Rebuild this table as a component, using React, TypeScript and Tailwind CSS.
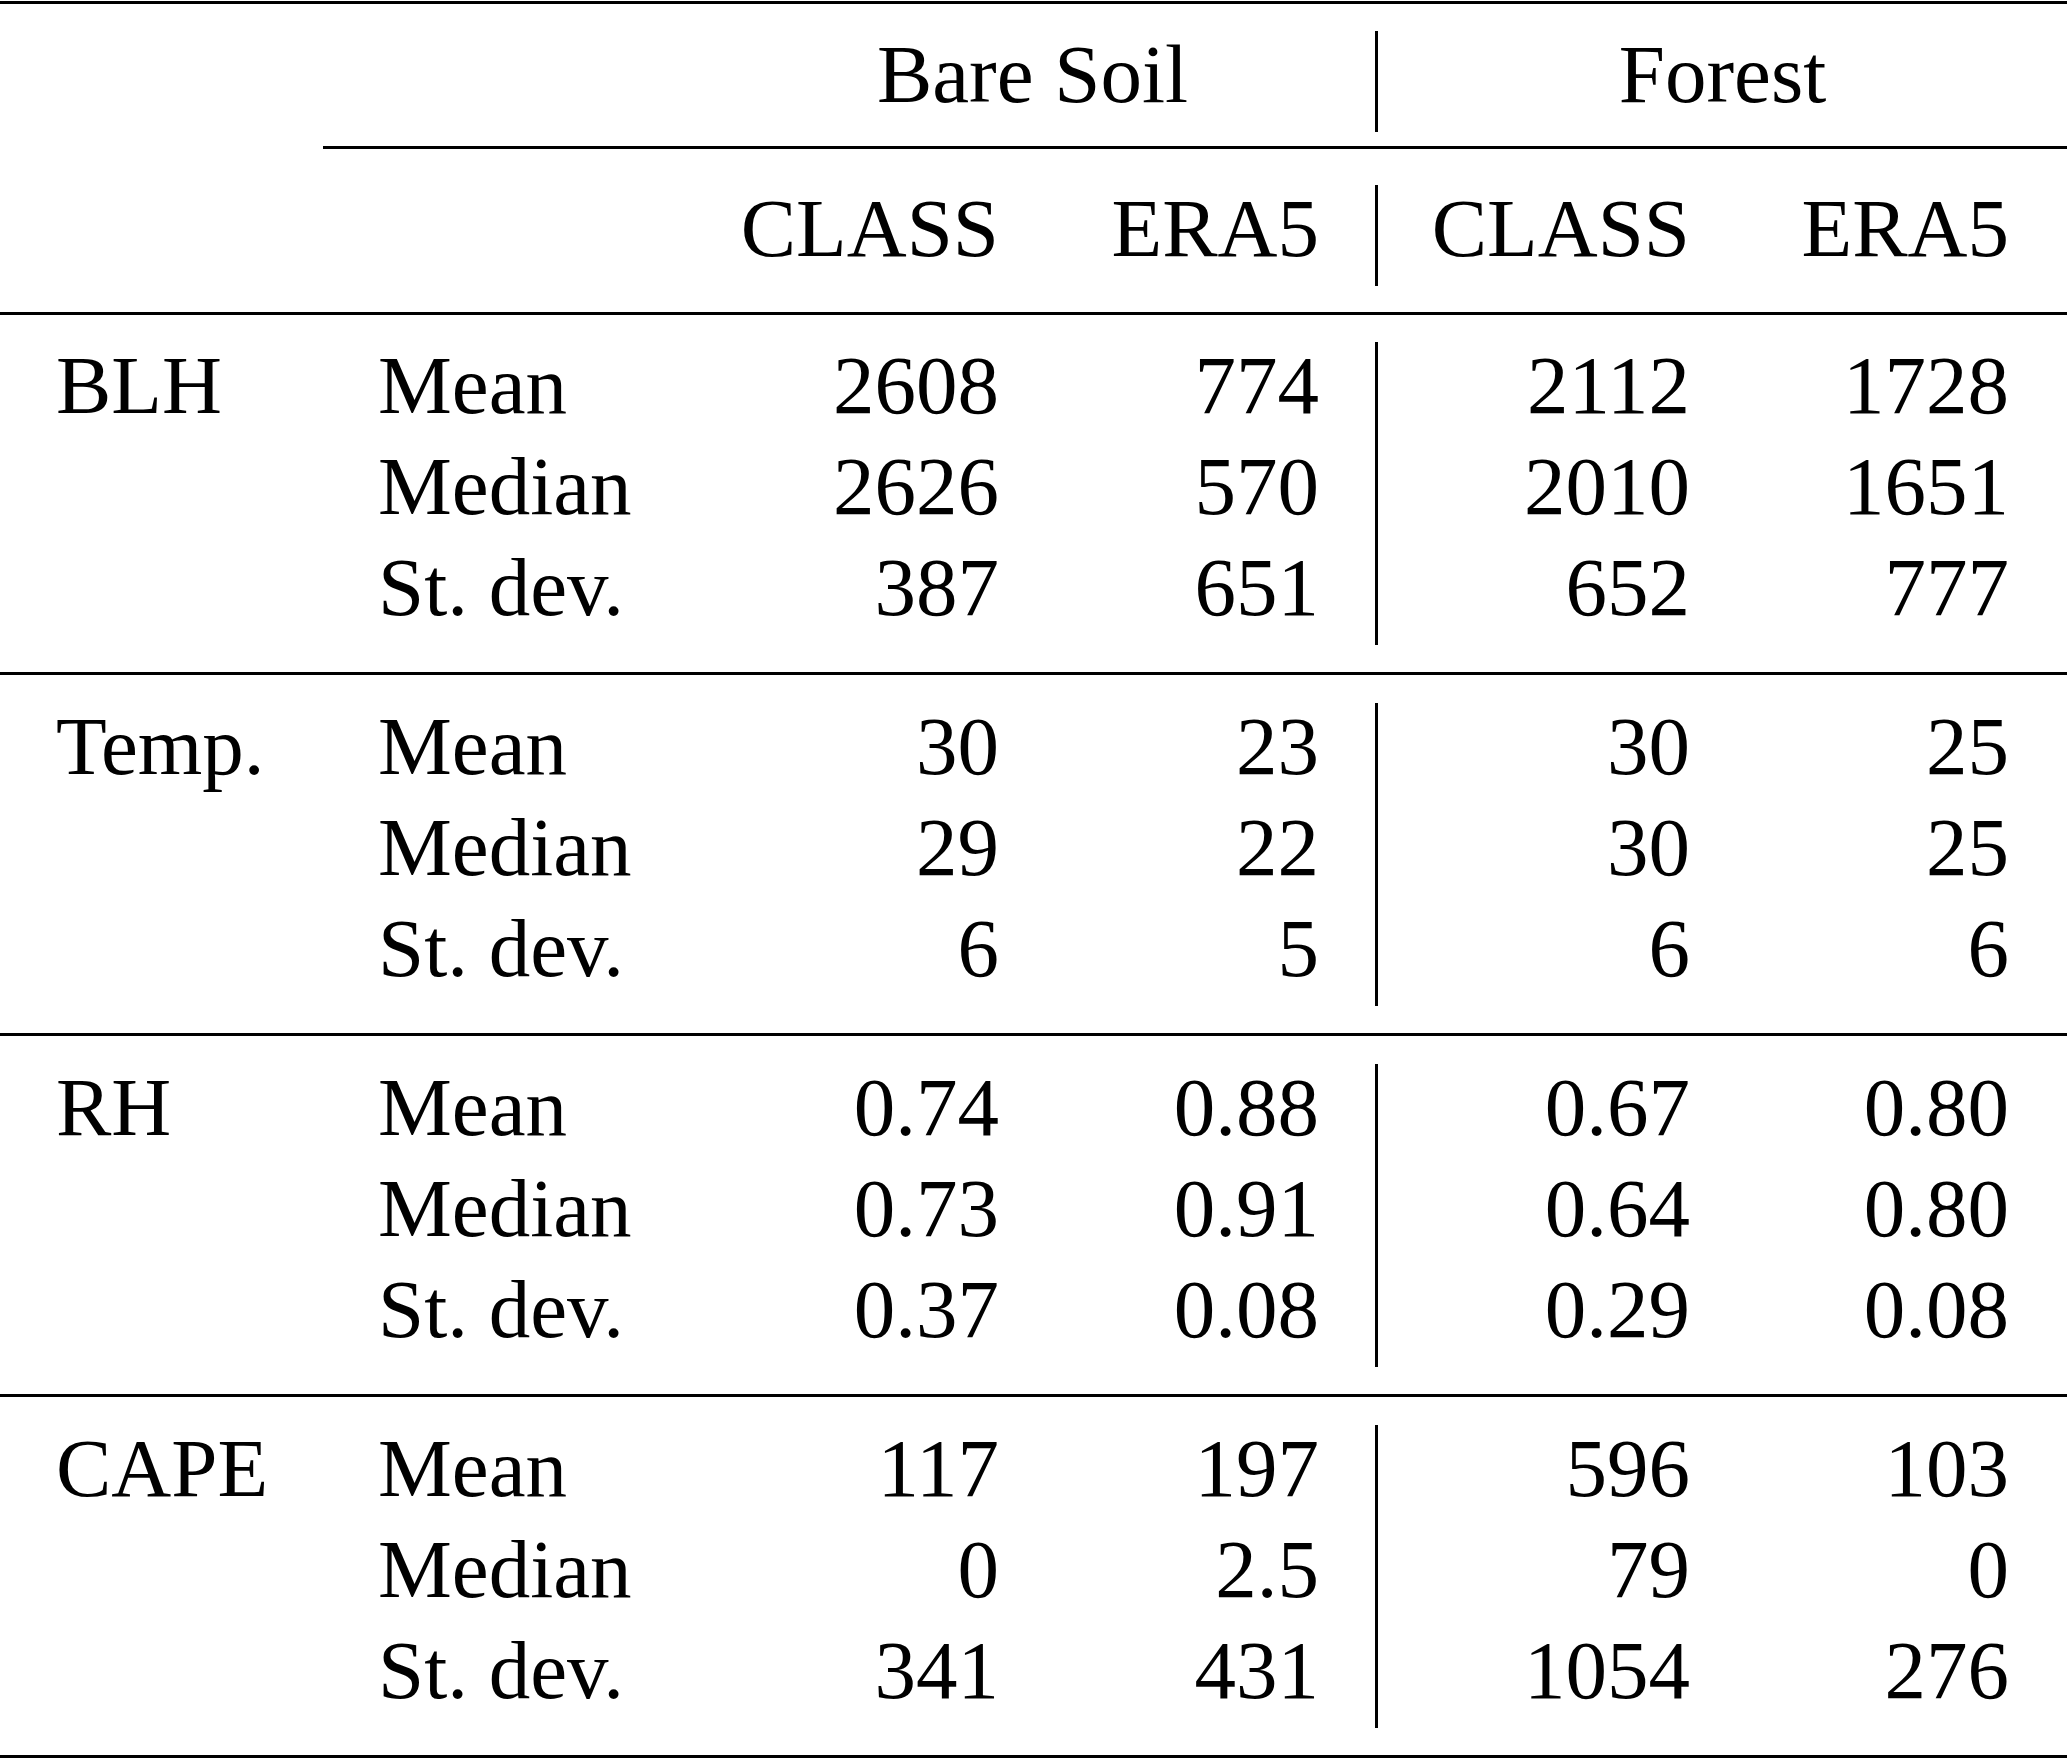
const groups = [
  {
    name: 'BLH',
    rows: [
      ['Mean', '2608', '774', '2112', '1728'],
      ['Median', '2626', '570', '2010', '1651'],
      ['St. dev.', '387', '651', '652', '777'],
    ],
  },
  {
    name: 'Temp.',
    rows: [
      ['Mean', '30', '23', '30', '25'],
      ['Median', '29', '22', '30', '25'],
      ['St. dev.', '6', '5', '6', '6'],
    ],
  },
  {
    name: 'RH',
    rows: [
      ['Mean', '0.74', '0.88', '0.67', '0.80'],
      ['Median', '0.73', '0.91', '0.64', '0.80'],
      ['St. dev.', '0.37', '0.08', '0.29', '0.08'],
    ],
  },
  {
    name: 'CAPE',
    rows: [
      ['Mean', '117', '197', '596', '103'],
      ['Median', '0', '2.5', '79', '0'],
      ['St. dev.', '341', '431', '1054', '276'],
    ],
  },
];

const grid = 'grid grid-cols-[323px_367px_368px_317px_372px_320px] h-[101px]';

function Rule({ className = '' }: { className?: string }) {
  return <div className={`h-[3px] bg-black ${className}`} />;
}

function DataRow({ label, cells }: { label: string; cells: string[] }) {
  return (
    <div className={grid}>
      <div className="pl-[56px]">{label}</div>
      <div className="pl-[55px]">{cells[0]}</div>
      <div className="pr-[59px] text-right">{cells[1]}</div>
      <div className="pr-[56px] text-right">{cells[2]}</div>
      <div className="border-l-[3px] border-black pr-[57px] text-right">{cells[3]}</div>
      <div className="pr-[58px] text-right">{cells[4]}</div>
    </div>
  );
}

export default function App() {
  return (
    <div className="w-[2067px] min-h-[1759px] bg-white pt-[1px] font-['Liberation_Serif','Times_New_Roman',serif] text-[83px] leading-[87px] text-black">
      <Rule />

      {/* group headers */}
      <div className={`${grid} mt-[27px]`}>
        <div className="col-span-2" />
        <div className="col-span-2 text-center">Bare Soil</div>
        <div className="col-span-2 border-l-[3px] border-black text-center">Forest</div>
      </div>
      <Rule className="mt-[14px] ml-[323px]" />

      {/* source headers */}
      <div className={`${grid} mt-[36px]`}>
        <div />
        <div />
        <div className="pr-[59px] text-right">CLASS</div>
        <div className="pr-[56px] text-right">ERA5</div>
        <div className="border-l-[3px] border-black pr-[57px] text-right">CLASS</div>
        <div className="pr-[58px] text-right">ERA5</div>
      </div>
      <Rule className="mt-[26px]" />

      {groups.map((g, gi) => (
        <div key={g.name} className={gi === 0 ? 'mt-[27px]' : 'mt-[28px]'}>
          {g.rows.map((r, ri) => (
            <DataRow key={r[0]} label={ri === 0 ? g.name : ''} cells={r} />
          ))}
          <Rule className="mt-[27px]" />
        </div>
      ))}
    </div>
  );
}
